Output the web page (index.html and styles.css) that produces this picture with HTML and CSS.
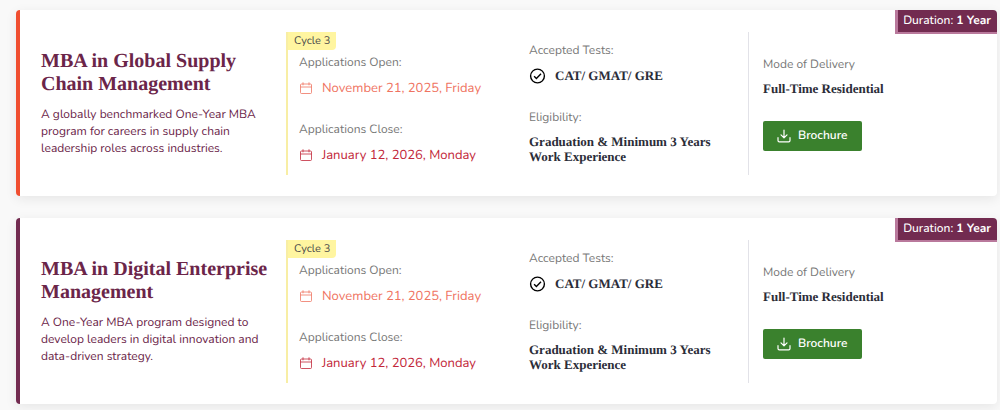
FILE: index.html
```
<!DOCTYPE html>
<html lang="en">
    <head>
        <meta charset="UTF-8">
        <meta name="viewport" content="width=device-width, initial-scale=1.0">
        <title>MBA Programs</title>

        <link rel="stylesheet" href="styles.css">
    </head>
    <body>
        <!-- Icons shared by the cards -->
        <svg class="icon-defs" aria-hidden="true">
            <symbol id="icon-calendar" viewBox="0 0 12 12">
                <path d="M1.5 2h9a1 1 0 0 1 1 1v7.5a1 1 0 0 1-1 1h-9a1 1 0 0 1-1-1V3a1 1 0 0 1 1-1zM.5 5h11M3 .3v3M9 .3v3" fill="none" stroke="currentColor" stroke-width=".8"/>
            </symbol>
            <symbol id="icon-check" viewBox="0 0 16 16">
                <circle cx="8" cy="8" r="6.9" fill="none" stroke="currentColor" stroke-width="1.4"/>
                <path d="M4.6 8.2l2.3 2.3 4.6-4.7" fill="none" stroke="currentColor" stroke-width="1.4"/>
            </symbol>
            <symbol id="icon-download" viewBox="0 0 14 14">
                <path d="M7 1v7.6M4 5.9l3 3 3-3M1 8.7v2.8a1.3 1.3 0 0 0 1.3 1.3h9.4a1.3 1.3 0 0 0 1.3-1.3V8.7" fill="none" stroke="currentColor" stroke-width="1.2" stroke-linecap="round" stroke-linejoin="round"/>
            </symbol>
        </svg>

        <main class="programs">
            <article class="card card-supply">
                <div class="duration">Duration: <strong>1 Year</strong></div>
                <div class="col about">
                    <h2>MBA in Global Supply Chain Management</h2>
                    <p>A globally benchmarked One-Year MBA program for careers in supply chain leadership roles across industries.</p>
                </div>
                <div class="col dates">
                    <span class="cycle">Cycle 3</span>
                    <div class="item">
                        <span class="label">Applications Open:</span>
                        <span class="date open"><svg class="icon-calendar"><use href="#icon-calendar"/></svg>November 21, 2025, Friday</span>
                    </div>
                    <div class="item">
                        <span class="label">Applications Close:</span>
                        <span class="date close"><svg class="icon-calendar"><use href="#icon-calendar"/></svg>January 12, 2026, Monday</span>
                    </div>
                </div>
                <div class="col criteria">
                    <div class="item">
                        <span class="label">Accepted Tests:</span>
                        <span class="value tests"><svg class="icon-check"><use href="#icon-check"/></svg>CAT/ GMAT/ GRE</span>
                    </div>
                    <div class="item">
                        <span class="label">Eligibility:</span>
                        <span class="value">Graduation &amp; Minimum 3 Years Work Experience</span>
                    </div>
                </div>
                <div class="col delivery">
                    <div class="item">
                        <span class="label">Mode of Delivery</span>
                        <span class="value">Full-Time Residential</span>
                    </div>
                    <button type="button" class="brochure"><svg class="icon-download"><use href="#icon-download"/></svg>Brochure</button>
                </div>
            </article>

            <article class="card card-digital">
                <div class="duration">Duration: <strong>1 Year</strong></div>
                <div class="col about">
                    <h2>MBA in Digital Enterprise Management</h2>
                    <p>A One-Year MBA program designed to develop leaders in digital innovation and data-driven strategy.</p>
                </div>
                <div class="col dates">
                    <span class="cycle">Cycle 3</span>
                    <div class="item">
                        <span class="label">Applications Open:</span>
                        <span class="date open"><svg class="icon-calendar"><use href="#icon-calendar"/></svg>November 21, 2025, Friday</span>
                    </div>
                    <div class="item">
                        <span class="label">Applications Close:</span>
                        <span class="date close"><svg class="icon-calendar"><use href="#icon-calendar"/></svg>January 12, 2026, Monday</span>
                    </div>
                </div>
                <div class="col criteria">
                    <div class="item">
                        <span class="label">Accepted Tests:</span>
                        <span class="value tests"><svg class="icon-check"><use href="#icon-check"/></svg>CAT/ GMAT/ GRE</span>
                    </div>
                    <div class="item">
                        <span class="label">Eligibility:</span>
                        <span class="value">Graduation &amp; Minimum 3 Years Work Experience</span>
                    </div>
                </div>
                <div class="col delivery">
                    <div class="item">
                        <span class="label">Mode of Delivery</span>
                        <span class="value">Full-Time Residential</span>
                    </div>
                    <button type="button" class="brochure"><svg class="icon-download"><use href="#icon-download"/></svg>Brochure</button>
                </div>
            </article>
        </main>
    </body>
</html>
```
FILE: styles.css
```
* {
    box-sizing: border-box;
}

body {
    font-family: Nunito, Lato, sans-serif;
    font-size: 12px;
    text-rendering: geometricPrecision;
    margin: 0;
    background-color: #f9f9f9;
}

.icon-defs {
    display: none;
}

.programs {
    display: flex;
    flex-direction: column;
    gap: 22px;
    padding: 10px 3px 6px 16px;
}

.card {
    position: relative;
    display: grid;
    grid-template-columns: 266fr 231fr 231fr 249fr;
    padding: 22px 0 21px;
    background-color: white;
    border-left: 4px solid #f04e30;
    border-radius: 4px;
    box-shadow: 0 3px 12px rgba(0, 0, 0, 0.08);
}

.card-digital {
    border-left-color: #722b50;
}

/* Duration ribbon in the corner */
.duration {
    position: absolute;
    top: 0;
    right: 0;
    padding: 2px 6px 2px 5px;
    border-left: 3px solid #b9799c;
    border-bottom: 2px solid #b9799c;
    border-top-right-radius: 4px;
    background-color: #722b50;
    color: white;
    font-size: 12px;
    font-weight: 500;
    line-height: 18px;
}

.duration strong {
    font-weight: 700;
}

.col {
    display: flex;
    flex-direction: column;
    justify-content: center;
}

.about {
    padding: 0 16px 0 21px;
    color: #6b2549;
}

.about h2 {
    margin: 0 0 11px;
    font-family: "Liberation Serif", serif;
    font-size: 20px;
    line-height: 23px;
}

.about p {
    margin: 0;
    line-height: 17px;
}

.dates {
    align-items: flex-start;
    justify-content: flex-start;
    gap: 25px;
    padding: 23px 0 11px 11px;
    border-left: 2px solid #f8eea5;
    position: relative;
}

.cycle {
    position: absolute;
    top: 0;
    left: 0;
    padding: 0 6px;
    border-bottom-right-radius: 4px;
    background-color: #fff5a0;
    color: #4a4a4a;
    font-size: 11px;
    line-height: 18px;
}

.item {
    display: flex;
    flex-direction: column;
}

.label {
    margin-bottom: 7px;
    color: #777;
    line-height: 17px;
}

.date {
    display: flex;
    align-items: center;
    gap: 9px;
    font-size: 13px;
    line-height: 18px;
}

.date.open {
    color: #ef7361;
}

.date.close {
    color: #c22638;
}

.icon-calendar {
    width: 14px;
    height: 12px;
}

.criteria {
    gap: 25px;
    padding: 0 24px 0 12px;
}

.value {
    color: #2b2d38;
    font-family: "Liberation Serif", serif;
    font-size: 13px;
    font-weight: bold;
    line-height: 15px;
}

.tests {
    display: flex;
    align-items: center;
    gap: 9px;
    line-height: 18px;
}

.icon-check {
    width: 17px;
    height: 16px;
    color: black;
}

.delivery {
    align-items: flex-start;
    gap: 25px;
    padding-left: 14px;
    border-left: 1px solid #e2e2e8;
}

.brochure {
    display: flex;
    align-items: center;
    gap: 7px;
    height: 30px;
    padding: 0 14px;
    border: none;
    border-radius: 2px;
    background-color: #3a812d;
    color: white;
    font-family: inherit;
    font-size: 12px;
    font-weight: 600;
    text-rendering: inherit;
    cursor: pointer;
}

.icon-download {
    width: 14px;
    height: 14px;
}
```
